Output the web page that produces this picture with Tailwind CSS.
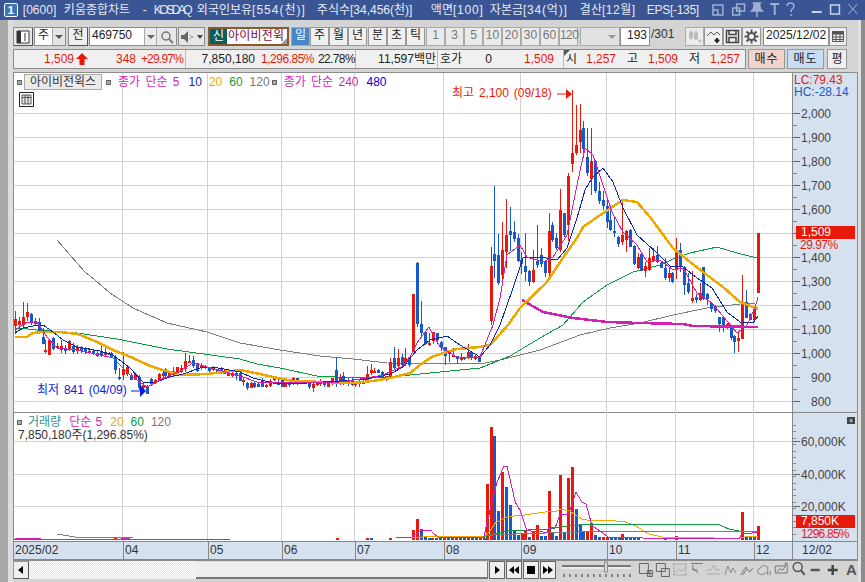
<!DOCTYPE html>
<html lang="ko">
<head>
<meta charset="UTF-8" />
<title>키움종합차트</title>
<script src="https://cdn.jsdelivr.net/npm/@tailwindcss/browser@4"></script>
</head>
<body class="w-[865px] h-[582px] overflow-hidden bg-[#d4d4d4] text-[12px] leading-[14px] text-[#222] [font-family:'Liberation_Sans','Noto_Sans_CJK_KR',sans-serif]">

<!-- title bar -->
<div class="h-[20px] bg-[#3a5593] flex items-center text-[#e6eaf4] whitespace-nowrap">
  <div class="ml-[4px] w-[14px] h-[14px] rounded-[2px] border border-white bg-[#3f73b8] text-white text-[11px] font-bold flex items-center justify-center">1</div>
  <div class="ml-[5px] flex">
    <span class="w-[41px]">[0600]</span>
    <span class="w-[79px]">키움종합차트</span>
    <span class="w-[11px]">-</span>
    <span class="w-[43px] tracking-[-2.5px]">KOSDAQ</span>
    <span class="w-[120px]">외국인보유<span class="tracking-[1px]">[554(천)]</span></span>
    <span class="w-[114px]">주식수[34,456(천)]</span>
    <span class="w-[59px]">액면<span class="tracking-[0.8px]">[100]</span></span>
    <span class="w-[90px]">자본금<span class="tracking-[0.8px]">[34(억)]</span></span>
    <span class="w-[67px]">결산<span class="tracking-[0.5px]">[12월]</span></span>
    <span class="w-[54px] tracking-[-0.3px]">EPS[-135]</span>
  </div>
  <svg class="ml-[6px]" width="160" height="20" viewBox="706 0 160 20" fill="none" stroke="#9fb0d2" stroke-width="1.5">
    <path d="M712 5h10v10h-10zM712 10h5v5" />
    <path d="M736 4h8v7h-8zM732 8h7v7h-7z" />
    <path d="M752 3h9M754 3l-1 6-2 2h11l-2-2-1-6M756.500 11v6" fill="#9fb0d2" />
    <path d="M770 4h9M774.500 4v11" stroke-width="2" />
    <path d="M787 6c0-4 7-4 7 0 0 3-3 2-3 6M791 14v2" />
    <path d="M812 12h10" stroke="#cdd6e8" stroke-width="2" />
    <path d="M831 5h9v9h-9z" stroke="#cdd6e8" />
    <path d="M849 4l9 10M858 4l-9 10" stroke="#a9b7d4" stroke-width="1" />
  </svg>
</div>

<div class="flex h-[562px]">
  <!-- left frame -->
  <div class="w-[8px] bg-[#a8a8a8]"></div>
  <div class="w-[5px] bg-[#dedede]"></div>

  <div class="w-[845px]">
    <!-- toolbar -->
    <div class="h-[19px] mt-[7px] flex whitespace-nowrap">
      <div class="w-[20px] bg-[#e8e8e8] border border-[#8c8c8c] border-r-[#555] border-b-[#555] flex items-center justify-center">
        <svg width="14" height="14" viewBox="0 0 14 14"><path d="M1 1h12v12H1z" fill="#fff" stroke="#333" /><path d="M1 1h4v12H1z" fill="#333" /><path d="M9 3v8" stroke="#333" /></svg>
      </div>
      <div class="ml-[1px] w-[32px] bg-white border border-[#8c8c8c] flex">
        <span class="w-[17px] text-center">주</span>
        <span class="flex-1 bg-[#e4e4e4] border-l border-[#aaa] flex items-center justify-center"><span class="border-x-[4px] border-x-transparent border-t-[4px] border-t-[#555]"></span></span>
      </div>
      <div class="ml-[2px] w-[20px] bg-[#efefef] border border-[#8c8c8c] border-r-[#555] border-b-[#555] text-center">전</div>
      <div class="ml-[1px] w-[88px] bg-white border border-[#8c8c8c] flex">
        <span class="w-[54px] pl-[2px]">469750</span>
        <span class="w-[13px] bg-[#ececec] border-x border-[#aaa] flex items-center justify-center"><span class="border-x-[4px] border-x-transparent border-t-[4px] border-t-[#666]"></span></span>
        <span class="flex-1 bg-[#e8e8e8] flex items-center justify-center">
          <svg width="14" height="14" viewBox="0 0 14 14" fill="none" stroke="#777" stroke-width="1.500"><circle cx="6" cy="6" r="4" /><path d="M9 9l4 4" stroke-width="2" /></svg>
        </span>
      </div>
      <div class="ml-[1px] w-[27px] bg-[#e6e6e6] border border-[#8c8c8c] flex items-center">
        <svg width="17" height="14" viewBox="0 0 17 14"><path d="M2 5h3l4-4v12l-4-4H2z" fill="#666" /><path d="M11 5v1M11 8v1M13 6v2" stroke="#666" /></svg>
        <span class="ml-[1px] border-x-[3px] border-x-transparent border-t-[4px] border-t-[#444]"></span>
      </div>
      <div class="ml-[3px] w-[81px] border-2 border-[#8a5a2a] bg-white flex relative leading-[15px]">
        <span class="w-[17px] bg-[#0b5c60] text-white text-center">신</span>
        <span class="pl-[1px] text-[#7c0a42] tracking-[0.2px]">아이비전윅</span>
        <span class="absolute right-0 bottom-0 border-l-[6px] border-l-transparent border-b-[6px] border-b-[#999]"></span>
      </div>
      <div class="ml-[2px] w-[19px] bg-[#4a86c6] text-white text-center border border-[#8ab0da]">일</div>
      <div class="w-[19px] bg-[#f0f0f0] text-center border border-[#999]">주</div>
      <div class="w-[19px] bg-[#f0f0f0] text-center border border-[#999]">월</div>
      <div class="w-[19px] bg-[#f0f0f0] text-center border border-[#999]">년</div>
      <div class="ml-[1px] w-[19px] bg-[#f0f0f0] text-center border border-[#999]">분</div>
      <div class="w-[19px] bg-[#f0f0f0] text-center border border-[#999]">초</div>
      <div class="w-[19px] bg-[#f0f0f0] text-center border border-[#999]">틱</div>
      <div class="ml-[1px] flex text-[#777]">
        <div class="w-[19px] bg-[#eaeaea] text-center border border-[#aaa]">1</div>
        <div class="w-[19px] bg-[#eaeaea] text-center border border-[#aaa]">3</div>
        <div class="w-[19px] bg-[#eaeaea] text-center border border-[#aaa]">5</div>
        <div class="w-[19px] bg-[#eaeaea] text-center border border-[#aaa]">10</div>
        <div class="w-[19px] bg-[#eaeaea] text-center border border-[#aaa]">20</div>
        <div class="w-[19px] bg-[#eaeaea] text-center border border-[#aaa]">30</div>
        <div class="w-[19px] bg-[#eaeaea] text-center border border-[#aaa]">60</div>
        <div class="w-[19px] bg-[#eaeaea] text-center border border-[#aaa] tracking-[-0.6px]">120</div>
      </div>
      <div class="ml-[2px] w-[40px] bg-[#e2e2e2] border border-[#aaa] flex justify-end">
        <span class="w-[14px] flex items-center justify-center"><span class="border-x-[4px] border-x-transparent border-t-[4px] border-t-[#999]"></span></span>
      </div>
      <div class="w-[30px] bg-white border border-[#8c8c8c] text-right pr-[2px]">193</div>
      <div class="w-[24px] pl-[1px] text-[#333]">/301</div>
      <div class="ml-[11px] flex">
        <div class="w-[19px] bg-[#ececec] border border-[#aaa] flex items-center justify-center">
          <svg width="16" height="15" viewBox="0 0 16 15" stroke="#bbb"><path d="M4 1v10M9 1v10" /><path d="M2.500 3h3v6h-3zM7.500 4h3v6h-3z" fill="#bbb" /><path d="M13 10v4M11 12h4" /></svg>
        </div>
        <div class="w-[19px] bg-[#f0f0f0] border border-[#999] flex items-center justify-center">
          <svg width="16" height="15" viewBox="0 0 16 15" fill="none" stroke="#555"><path d="M1 7l4-4 3 3 3-3 3 3" /><path d="M11 9v5M8.500 11.500h5" stroke="#222" stroke-width="2" /></svg>
        </div>
        <div class="w-[19px] bg-[#f0f0f0] border border-[#999] flex items-center justify-center">
          <svg width="15" height="15" viewBox="0 0 15 15" fill="none" stroke="#444" stroke-width="1.500"><path d="M1.500 1.500h12v12h-12z" /><path d="M4 1.500v4h7v-4M4 13.500v-5h7v5" /></svg>
        </div>
        <div class="w-[19px] bg-[#f0f0f0] border border-[#999] flex items-center justify-center">
          <svg width="15" height="15" viewBox="0 0 15 15" fill="none" stroke="#555" stroke-width="2"><circle cx="7.500" cy="7.500" r="3.500" /><path d="M7.500 0.500v3M7.500 11.500v3M0.500 7.500h3M11.500 7.500h3M2.500 2.500l2 2M10.500 10.500l2 2M12.500 2.500l-2 2M4.500 10.500l-2 2" /></svg>
        </div>
      </div>
      <div class="ml-[2px] w-[66px] bg-white border border-[#8c8c8c] pl-[2px]">2025/12/02</div>
      <div class="w-[18px] bg-[#efefef] border border-[#999] flex items-center justify-center">
        <svg width="14" height="13" viewBox="0 0 14 13" fill="none" stroke="#555"><path d="M1.500 1.500h11v10h-11z" /><path d="M1.500 2h11v2h-11z" fill="#555" /><path d="M1.500 7h11M1.500 9.500h11M5 4v7M9 4v7" /></svg>
      </div>
    </div>

    <!-- quote row -->
    <div class="h-[20px] mt-[3px] flex whitespace-nowrap">
      <div class="w-[733px] bg-[#f0f0f0] border border-[#8c8c8c] flex text-[#e8190a] leading-[18px]">
        <div class="w-[172px] flex border-r border-[#bbb]">
          <span class="w-[60px] text-right">1,509</span>
          <svg class="ml-[2px] mt-[3px]" width="12" height="12" viewBox="0 0 12 12"><path d="M6 0l6 6H8.500v6h-5V6H0z" fill="#e8190a" /></svg>
          <span class="w-[48px] text-right">348</span>
          <span class="w-[47px] text-right tracking-[-0.8px]">+29.97%</span>
        </div>
        <div class="w-[170px] flex border-r border-[#bbb]">
          <span class="w-[69px] text-right text-[#222]">7,850,180</span>
          <span class="w-[59px] text-right tracking-[-0.5px]">1,296.85%</span>
          <span class="w-[41px] text-right text-[#222] tracking-[-0.6px]">22.78%</span>
        </div>
        <div class="w-[82px] border-r border-[#bbb] text-right pr-[1px] text-[#222]">11,597백만</div>
        <div class="w-[126px] flex border-r border-[#bbb]">
          <span class="ml-[2px] w-[24px] text-[#222]">호가</span>
          <span class="w-[28px] text-right text-[#222]">0</span>
          <span class="w-[62px] text-right">1,509</span>
        </div>
        <div class="flex-1 flex relative">
          <span class="absolute left-0 top-0 border-r-[6px] border-r-transparent border-t-[6px] border-t-[#555]"></span>
          <span class="ml-[2px] w-[12px] text-[#222]">시</span>
          <span class="w-[38px] text-right">1,257</span>
          <span class="ml-[11px] w-[12px] text-[#222]">고</span>
          <span class="w-[39px] text-right">1,509</span>
          <span class="ml-[11px] w-[12px] text-[#222]">저</span>
          <span class="w-[39px] text-right">1,257</span>
        </div>
      </div>
      <div class="ml-[2px] w-[37px] bg-[#f3d2ca] border border-[#999] text-center leading-[18px] tracking-[1px]">매수</div>
      <div class="ml-[2px] w-[37px] bg-[#c6ddf3] border border-[#999] text-center leading-[18px] tracking-[1px]">매도</div>
      <div class="ml-[3px] w-[20px] bg-[#efefef] border border-[#999] text-center leading-[18px]">평</div>
    </div>

    <!-- chart box -->
    <div class="mt-[3px] flex">
      <div class="w-[845px] border border-[#8c8c8c]">
        <div class="flex h-[340px] border-b border-[#888]">
          <div class="relative w-[778px] bg-white">
            <svg id="price" class="block" width="778" height="340" viewBox="14 73 778 340"></svg>
            <div class="absolute left-[3px] top-[1px] flex items-center whitespace-nowrap h-[16px]">
              <span class="w-[5px] h-[5px] bg-[#aaa] border border-[#666]"></span>
              <span class="ml-[2px] w-[78px] h-[16px] bg-[#ebebeb] border border-[#aaa] text-center text-[#333]">아이비전윅스</span>
              <span class="ml-[4px] w-[5px] h-[5px] bg-[#aaa] border border-[#666]"></span>
              <span class="ml-[7px] text-[#d41fb4] [word-spacing:2px]">종가 단순 5</span>
              <span class="ml-[9px] text-[#0a2aa8]">10</span>
              <span class="ml-[7px] text-[#efa800]">20</span>
              <span class="ml-[7px] text-[#109a40]">60</span>
              <span class="ml-[7px] text-[#777]">120</span>
              <span class="ml-[2px] w-[5px] h-[5px] bg-[#aaa] border border-[#666]"></span>
              <span class="ml-[7px] text-[#d41fb4] [word-spacing:2px]">종가 단순 240</span>
              <span class="ml-[8px] text-[#0000e0]">480</span>
            </div>
            <svg class="absolute left-[5px] top-[19px]" width="15" height="15" viewBox="0 0 15 15" fill="none" stroke="#222"><path d="M0.500 0.500h14v14h-14z" /><path d="M3 3h9v9H3z" fill="#e8e8e8" stroke="#555" /><path d="M3 5.500h9M6 3v9M9 3v9" stroke="#555" /></svg>
          </div>
          <div class="relative w-[65px] bg-[#d6e1f0] border-l border-[#888]">
            <svg id="priceAxis" class="block" width="64" height="340" viewBox="793 73 64 340"></svg>
            <div class="absolute left-[1px] top-[1px] text-[#e8190a] leading-[12px]">LC:79.43</div>
            <div class="absolute left-[1px] top-[13px] text-[#1659c8] leading-[12px]">HC:-28.14</div>
            <div class="absolute left-[3px] top-[153px] w-[59px] h-[13px] bg-[#e8190a] text-white pl-[5px] leading-[13px]">1,509</div>
            <div class="absolute left-[3px] top-[166px] pl-[4px] text-[#e8190a] leading-[13px] tracking-[-0.5px]">29.97%</div>
          </div>
        </div>
        <div class="flex h-[128px]">
          <div class="relative w-[778px] bg-white">
            <svg id="volume" class="block" width="778" height="128" viewBox="14 414 778 128"></svg>
            <div class="absolute left-[3px] top-[1px] flex items-center whitespace-nowrap h-[16px]">
              <span class="w-[5px] h-[5px] bg-[#aaa] border border-[#666]"></span>
              <span class="ml-[6px] text-[#2b8f96]">거래량</span>
              <span class="ml-[8px] text-[#d41fb4] [word-spacing:1px]">단순 5</span>
              <span class="ml-[8px] text-[#efa800]">20</span>
              <span class="ml-[7px] text-[#109a40]">60</span>
              <span class="ml-[7px] text-[#777]">120</span>
            </div>
            <div class="absolute left-[4px] top-[15px] whitespace-nowrap text-[#333]">7,850,180주(1,296.85%)</div>
          </div>
          <div class="relative w-[65px] bg-[#d6e1f0] border-l border-[#888]">
            <svg id="volAxis" class="block" width="64" height="128" viewBox="793 414 64 128"></svg>
            <div class="absolute left-[54px] top-[4px] w-[8px] h-[7px] bg-[#444] flex items-center justify-center text-white text-[7px] leading-[7px]">×</div>
            <div class="absolute left-[3px] top-[102px] w-[59px] h-[13px] bg-[#e8190a] text-white pl-[5px] leading-[13px]">7,850K</div>
            <div class="absolute left-[3px] top-[115px] pl-[5px] text-[#e8190a] leading-[12px] tracking-[-0.8px]">1296.85%</div>
          </div>
        </div>
        <!-- date axis -->
        <div class="relative h-[19px] bg-[#d6e1f0] border-y border-[#888] text-[#333] leading-[17px]">
          <span class="absolute left-[1px] top-0">2025/02</span>
          <span class="absolute left-[109px] top-0 pl-[1px] h-[17px] border-l border-[#888]">04</span>
          <span class="absolute left-[194px] top-0 pl-[1px] h-[17px] border-l border-[#888]">05</span>
          <span class="absolute left-[268px] top-0 pl-[1px] h-[17px] border-l border-[#888]">06</span>
          <span class="absolute left-[341px] top-0 pl-[1px] h-[17px] border-l border-[#888]">07</span>
          <span class="absolute left-[430px] top-0 pl-[1px] h-[17px] border-l border-[#888]">08</span>
          <span class="absolute left-[507px] top-0 pl-[1px] h-[17px] border-l border-[#888]">09</span>
          <span class="absolute left-[593px] top-0 pl-[1px] h-[17px] border-l border-[#888]">10</span>
          <span class="absolute left-[662px] top-0 pl-[1px] h-[17px] border-l border-[#888]">11</span>
          <span class="absolute left-[740px] top-0 pl-[1px] h-[17px] border-l border-[#888]">12</span>
          <span class="absolute left-[778px] top-0 pl-[9px] h-[17px] border-l border-[#888]">12/02</span>
        </div>
      </div>
    </div>

    <!-- scroll + tools -->
    <div class="h-[18px] flex">
      <div class="w-[16px] bg-[#efefef] border border-[#999] border-r-[#555] border-b-[#555] flex items-center justify-center">
        <span class="border-y-[4px] border-y-transparent border-r-[5px] border-r-black"></span>
      </div>
      <div class="w-[167px] bg-[repeating-conic-gradient(#e6e6e6_0_25%,#ffffff_0_50%)] bg-[length:2px_2px]"></div>
      <div class="w-[293px] bg-[#efefef] border-t border-[#ddd] border-b-2 border-b-[#777] border-r border-r-[#777]"></div>
      <div class="ml-[1px] w-[16px] bg-[#efefef] border border-[#666] flex items-center justify-center">
        <span class="border-y-[4px] border-y-transparent border-l-[5px] border-l-black"></span>
      </div>
      <div class="ml-[1px] w-[16px] bg-[#efefef] border border-[#666] flex items-center justify-center">
        <span class="border-y-[4px] border-y-transparent border-r-[5px] border-r-black"></span><span class="border-y-[4px] border-y-transparent border-r-[5px] border-r-black"></span>
      </div>
      <div class="ml-[1px] w-[16px] bg-[#efefef] border border-[#666] flex items-center justify-center">
        <span class="w-[8px] h-[8px] bg-black"></span>
      </div>
      <div class="ml-[1px] w-[16px] bg-[#efefef] border border-[#666] flex items-center justify-center">
        <span class="border-y-[4px] border-y-transparent border-l-[5px] border-l-black"></span><span class="border-y-[4px] border-y-transparent border-l-[5px] border-l-black"></span>
      </div>
      <svg class="ml-[5px]" width="301" height="18" viewBox="561 561 301 18" fill="none" stroke="#666">
        <path d="M562 566h69" stroke="#777" stroke-width="2" />
        <path d="M562 568h69" stroke="#fff" />
        <path d="M604.500 562h3v10h-3z" fill="#ddd" stroke="#888" />
        <path d="M564 574v3M570 574v3M576 574v3M582 574v3M588 574v3M594 574v3M600 574v3M606 574v3M612 574v3M618 574v3M624 574v3M630 574v3" stroke="#333" />
        <path d="M639.500 563.500h9v10h-9zM647.500 570.500h5v6h-5zM650 570.500v6M647.500 573.500h5" />
        <path d="M656.500 563.500h9v8h-9zM661.500 568.500h8v8h-8z" />
        <path d="M673.500 564h13M673.500 575h13M674 564v11M686 564v11" stroke-dasharray="2 1" stroke="#999" />
        <path d="M675 573l4-4 3 2 4-4" stroke="#aaa" />
        <path d="M691 563.500h12M693 568l5 5M693 565v5h5" stroke="#777" />
        <path d="M707 570h4l3-5 2 5h4M707 574h13" stroke="#aaa" />
        <path d="M725 575l3-9 3 7 2-5 3 5" stroke="#888" />
        <path d="M741 575l5-8 4 5 3-4M743 575l4-6" stroke="#777" />
        <path d="M758 570l6-5 4 2v5l-6 3-4-2zM768 575v-3M770.500 575v-4" stroke="#888" />
        <path d="M775.500 566h10v-3h2v10h-12zM777 572l3-3 3 1 3-4" stroke="#777" />
        <circle cx="798" cy="567" r="4.500" stroke="#555" stroke-width="1.500" />
        <path d="M801 570l4 5" stroke="#555" stroke-width="2" />
        <path d="M811 570h9" stroke="#555" stroke-width="2.500" />
        <path d="M828 570h10M833 565v10" stroke="#444" stroke-width="2.500" />
      </svg>
      <span class="ml-[-16px] w-[12px] text-[15px] leading-[18px] font-bold text-[#555]">A</span>
    </div>
  </div>

  <!-- right frame -->
  <div class="w-[3px] bg-[#e0e0e0]"></div>
  <div class="w-[4px] bg-[#8c8c8c]"></div>
</div>

<script>
  const RED = '#e8190a', BLUE = '#1659c8';
  const gridX = [122, 207, 281, 354, 443, 520, 606, 675, 753];

  // [zoomX, colour, high, top, bottom, low], read from 3x crops
  const seg = (x0, y0, rows) => rows.map(r => ({
    x: Math.round(x0 + r[0] / 3),
    c: r[1] === 'r' ? RED : BLUE,
    h: y0 + r[2] / 3, t: y0 + r[3] / 3, b: y0 + r[4] / 3, l: y0 + r[5] / 3
  }));

  const candles = [
    ...seg(0, 280, [
      [46,'r',92,118,140,160],[56,'r',110,122,134,150],[68,'r',66,110,135,140],[80,'r',70,97,112,125],[92,'b',100,102,130,135],
      [104,'r',115,122,132,135],[116,'b',115,125,150,155],[128,'b',145,170,190,192],[136,'r',180,210,212,220],[148,'r',178,180,224,224],
      [160,'b',170,175,207,210],[172,'r',190,197,200,205],[184,'r',180,198,210,218],[196,'b',195,205,215,222],[208,'r',180,184,210,212],
      [220,'b',190,198,215,222],[232,'r',195,200,212,222],[244,'b',198,202,214,220],[254,'b',200,208,218,222],[266,'b',205,212,218,224],
      [278,'b',210,214,222,226],[290,'r',212,218,226,230],[302,'b',198,212,228,232],[314,'r',205,216,224,232],[326,'b',216,218,224,226],
      [334,'b',215,220,232,234],[346,'b',225,232,272,282],[358,'b',265,292,298,300],[370,'r',215,268,285,298],[382,'r',255,262,282,288],
      [394,'b',278,284,298,300],[404,'r',280,282,300,302],[416,'b',285,292,325,330],[428,'r',305,315,325,335],[440,'b',316,318,342,342],
      [452,'b',295,298,312,320],[464,'r',298,300,310,312],[476,'r',280,282,302,305],[488,'r',268,278,288,295],[496,'b',265,268,288,292],
      [508,'r',272,280,292,294],[520,'r',262,272,285,288],[532,'r',262,262,280,285],[544,'r',255,265,278,280],[556,'r',218,244,268,275],
      [568,'r',226,244,246,248],[580,'b',228,240,258,265],[590,'b',248,250,275,276],[602,'r',250,258,265,272],[614,'b',255,258,262,266],
      [626,'b',260,262,275,282],[638,'r',258,262,272,274],[650,'b',266,268,278,280],[662,'b',262,268,280,282],[672,'r',270,275,280,282],
      [684,'r',268,275,288,290],[696,'r',276,278,288,290],[708,'b',268,280,290,300],[720,'b',270,278,302,304]
    ]),
    ...seg(240, 250, [
      [10,'r',380,390,395,408],[22,'b',396,400,415,420],[34,'r',396,398,413,414],[42,'b',392,400,412,414],[55,'b',400,402,410,412],
      [67,'b',385,390,410,412],[79,'r',402,404,410,414],[91,'r',388,394,410,412],[103,'r',378,384,390,392],[115,'b',385,395,405,407],
      [127,'b',385,388,411,412],[136,'r',400,402,410,411],[148,'b',395,397,405,410],[160,'r',380,385,403,405],[172,'b',384,385,403,405],
      [196,'r',390,393,398,402],[208,'b',395,397,412,415],[218,'r',395,402,415,425],[230,'r',398,400,404,406],[241,'r',388,397,404,410],
      [253,'b',392,396,404,410],[265,'r',393,398,410,412],[277,'r',385,385,403,405],[289,'b',322,360,395,412],[301,'r',372,382,395,405],
      [310,'b',365,377,390,405],[323,'b',385,390,403,408],[335,'b',385,390,405,410],[346,'r',395,397,405,410],[358,'b',390,392,400,410],
      [370,'r',391,393,402,404],[382,'r',348,372,390,395],[394,'r',342,360,370,375],[403,'r',355,362,368,370],[415,'b',358,360,368,370],
      [427,'b',362,367,390,392],[439,'r',378,378,390,392],[451,'r',325,335,385,387],[463,'b',292,325,355,358],[475,'r',296,325,350,355],
      [487,'b',312,320,345,350],[496,'r',295,323,340,350],[508,'b',320,322,345,350],[520,'r',132,132,307,307],[532,'b',36,38,222,232],
      [544,'b',153,222,250,265],[556,'b',244,245,282,285],[568,'r',250,278,285,290],[578,'r',246,247,275,282],[590,'b',249,250,272,274],
      [602,'b',274,275,292,305],[614,'b',292,292,318,345],[626,'r',305,307,310,335],[638,'r',295,315,320,322],[650,'b',317,318,326,340],
      [662,'r',310,320,328,335],[672,'b',321,322,328,330],[684,'r',283,305,320,328],[694,'b',306,307,326,330],[706,'r',312,318,328,330],
      [718,'b',319,320,335,337]
    ]),
    ...seg(460, 85, [
      [94,'r',487,543,708,720],[103,'b',303,507,527,580],[115,'b',447,510,595,600],[127,'r',410,495,570,590],[139,'r',342,450,500,550],
      [151,'b',365,438,450,497],[163,'b',407,440,462,470],[175,'b',447,460,528,530],[184,'b',500,525,538,565],[196,'b',445,543,562,590],
      [208,'b',556,558,590,605],[220,'r',495,555,590,595],[232,'b',420,528,540,550],[244,'b',490,510,538,548],[256,'b',526,528,565,578],
      [268,'r',385,438,565,585],[277,'b',410,420,465,470],[289,'b',445,460,490,495],[301,'r',312,375,495,500],[313,'b',384,385,450,455],
      [325,'r',265,272,420,470],[337,'r',15,205,238,262],[349,'r',60,180,205,210],[361,'r',57,135,170,205],[370,'b',108,130,192,220],
      [382,'b',130,215,262,275],[394,'r',130,228,282,332],[406,'b',226,228,318,325],[418,'b',290,318,348,355],[430,'b',318,345,362,375],
      [442,'b',340,362,410,430],[451,'b',360,405,435,437],[463,'b',395,438,445,455],[475,'b',453,455,475,485],[487,'r',350,450,472,480],
      [499,'r',435,437,463,500],[511,'b',433,435,485,487],[523,'b',481,483,538,540],[535,'r',505,517,550,552],[544,'b',505,508,558,560],
      [556,'r',530,543,558,575],[568,'r',490,520,555,555],[580,'r',490,513,525,530],[592,'b',495,510,532,534]
    ]),
    ...seg(640, 190, [
      [15,'r',225,230,243,260],[27,'r',175,205,240,245],[39,'r',180,198,212,215],[51,'b',168,195,215,218],[63,'b',216,218,232,234],
      [75,'b',205,233,264,270],[87,'r',235,248,263,278],[97,'b',246,248,275,280],[109,'r',143,180,238,265],[121,'b',158,180,232,245],
      [133,'b',228,230,283,315],[145,'b',248,278,306,310],[157,'r',243,323,332,340],[169,'b',312,322,332,340],[179,'r',280,308,330,335],
      [190,'b',232,232,328,330],[202,'b',310,312,328,345],[214,'b',336,338,355,365],[226,'b',345,350,363,370],[238,'b',380,381,402,425],
      [250,'b',380,381,415,425],[262,'r',400,402,415,417],[272,'b',408,410,442,450],[283,'b',436,438,457,490],[295,'r',425,443,453,485],
      [307,'r',255,335,445,445],[319,'b',300,336,383,385],[331,'b',370,372,390,392],[343,'r',352,355,390,390],[355,'r',130,130,310,310]
    ])
  ];

  const ma = {
    gray: [[57,240],[70,255],[85,272],[95,280],[110,293],[133,308],[167,323],[207,332],[240,343],[280,350],[320,356],[353,359],[387,363],[480,364],[500,360],[540,350],[580,335],[610,328],[640,323],[673,315],[707,308],[740,304],[755,303]],
    green: [[18,328],[37,330],[77,333],[117,339],[167,349],[240,359],[257,364],[280,368],[317,376],[353,378],[387,377],[410,375],[440,372],[480,368],[510,356],[540,338],[563,325],[583,302],[607,285],[633,272],[660,265],[673,259],[690,253],[717,247],[737,253],[757,258]],
    ma240: [[522,300],[543,312],[573,318],[607,322],[640,323],[683,324],[693,326],[758,327]],
    orange: [[15,337],[27,337],[33,333],[42,332],[60,332],[78,334],[97,342],[113,350],[133,358],[150,366],[163,370],[180,375],[207,374],[240,370],[260,374],[273,377],[293,381],[323,382],[353,383],[373,381],[390,378],[410,373],[420,365],[432,357],[443,353],[457,349],[480,347],[490,345],[508,325],[520,308],[547,282],[560,262],[577,238],[583,227],[603,213],[623,200],[637,202],[650,217],[673,248],[690,262],[707,275],[723,287],[740,302],[758,309]],
    navy: [[15,333],[23,328],[33,326],[43,325],[53,332],[63,340],[77,347],[100,351],[113,355],[130,368],[143,382],[153,383],[170,377],[183,374],[200,368],[213,367],[240,372],[253,378],[273,383],[307,383],[340,381],[367,379],[390,374],[403,367],[417,350],[430,340],[447,336],[460,345],[480,357],[490,345],[500,325],[513,288],[523,258],[540,257],[557,260],[567,248],[577,218],[585,190],[592,178],[603,168],[613,182],[623,208],[637,235],[657,253],[670,266],[683,267],[697,278],[712,288],[727,312],[740,322],[753,323],[758,316]],
    pink: [[15,330],[27,322],[37,322],[47,337],[57,348],[77,350],[100,355],[113,358],[130,375],[147,387],[160,380],[180,371],[193,363],[207,367],[240,376],[257,382],[280,382],[307,383],[340,382],[367,378],[383,375],[403,366],[410,357],[417,343],[429,327],[440,347],[457,357],[480,357],[493,325],[500,298],[507,255],[520,245],[527,257],[543,262],[553,257],[567,235],[577,185],[585,148],[593,155],[603,185],[612,212],[623,232],[637,245],[647,262],[660,260],[673,270],[683,268],[697,293],[712,303],[722,315],[737,333],[747,325],[755,308],[758,297]]
  };

  const poly = (pts, stroke, w) => `<polyline points="${pts.map(p => p.join(',')).join(' ')}" fill="none" stroke="${stroke}" stroke-width="${w}" stroke-linejoin="round" shape-rendering="crispEdges" />`;

  // price pane
  let s = '';
  gridX.forEach(x => s += `<rect x="${x}" y="73" width="1" height="340" fill="#d2d2d2" />`);
  for (let y = 113; y <= 402; y += 24) s += `<rect x="14" y="${y}" width="778" height="1" fill="#d2d2d2" />`;
  s += poly(ma.gray, '#7d7d7d', 1) + poly(ma.green, '#109a40', 1);
  candles.forEach(k => {
    s += `<rect x="${k.x}" y="${Math.round(k.h)}" width="1" height="${Math.round(k.l - k.h)}" fill="${k.c}" />`;
    s += `<rect x="${k.x - 1}" y="${Math.round(k.t)}" width="3" height="${Math.max(2, Math.round(k.b - k.t))}" fill="${k.c}" />`;
  });
  s += poly(ma.ma240, '#d41fb4', 2.5) + poly(ma.orange, '#efa800', 2.5) + poly(ma.navy, '#0a2aa8', 1) + poly(ma.pink, '#d41fb4', 1);
  s += `<text x="452" y="97" fill="${RED}" font-size="12" word-spacing="1.500">최고 2,100 (09/18)</text>`;
  s += `<path d="M557 94h9" stroke="${RED}" /><path d="M566 89l6 5-6 5z" fill="${RED}" /><rect x="572" y="90" width="1" height="10" fill="${RED}" />`;
  s += `<text x="37" y="394" fill="#0a1ae0" font-size="12" word-spacing="1.500">최저 841 (04/09)</text>`;
  s += `<path d="M131 391h9" stroke="#0a1ae0" /><path d="M140 385l6 6-6 6z" fill="#0a1ae0" />`;
  document.getElementById('price').innerHTML = s;

  // price axis
  let a = '';
  const labels = ['2,000','1,900','1,800','1,700','1,600','1,500','1,400','1,300','1,200','1,100','1,000','900','800'];
  labels.forEach((t, i) => {
    const y = 113 + i * 24;
    a += `<rect x="793" y="${y}" width="7" height="1" fill="#666" /><rect x="793" y="${y + 12}" width="4" height="1" fill="#888" />`;
    if (t !== '1,500') a += `<text x="${t.length > 3 ? 801 : 811}" y="${y + 5}" fill="#444" font-size="12">${t}</text>`;
  });
  document.getElementById('priceAxis').innerHTML = a;

  // volume bars: [zoomX, colour, top] from crop at (432,400)
  const bars = [[1240,'r',393,0],[1252,'r',360,0],[1264,'b',390,0],[1276,'b',415,0],[1288,'b',418,0],[1010,'r',417,0],[1100,'r',417,0],[1114,'b',417,0],[1170,'r',417,0],[345,'r',418,0]]
    .map(b => [b[0] / 3, b[1], 400 + b[2] / 3]);
  [[165,'r',255],[178,'r',84],[187,'b',110],[199,'b',335],[211,'r',218],[223,'b',264],[235,'b',318],[247,'b',393],[259,'b',408],[269,'r',405],[280,'r',395],[292,'b',413],[304,'r',395],[316,'r',378],[328,'b',410],[340,'b',410],[352,'r',275],[361,'b',402],[373,'b',410],[385,'r',228],[397,'b',398],[409,'r',237],[421,'r',204],[433,'b',330],[445,'b',375],[454,'b',400],[466,'r',396],[478,'r',372],[490,'b',407],[502,'b',413],[514,'r',413],[526,'r',413],[538,'b',415],[550,'b',417],[560,'b',417],[571,'r',405],[583,'b',416],[595,'b',417],[607,'b',417],[619,'b',417],[700,'r',415],[733,'r',411],[930,'r',338],[942,'b',410],[954,'b',412],[966,'b',412],[978,'r',380]]
    .forEach(b => bars.push([432 + b[0] / 3, b[1], 400 + b[2] / 3]));
  for (let z = 0; z < 165; z += 12) bars.push([432 + z / 3, z % 36 ? 'b' : 'r', 539]);

  const zl = pts => pts.map(p => [432 + p[0] / 3, 400 + p[1] / 3]);
  let v = '';
  gridX.forEach(x => v += `<rect x="${x}" y="414" width="1" height="128" fill="#d2d2d2" />`);
  [442, 475, 507].forEach(y => v += `<rect x="14" y="${y}" width="778" height="1" fill="#d2d2d2" />`);
  bars.forEach(b => v += `<rect x="${Math.round(b[0]) - 1}" y="${Math.round(b[2])}" width="3" height="${541 - Math.round(b[2])}" fill="${b[1] === 'r' ? RED : BLUE}" />`);
  v += poly([[14,540],[230,540]], '#109a40', 1);
  v += poly([[15,539],[41,539]], '#d41fb4', 1) + poly([[121,539],[130,539]], '#d41fb4', 1);
  v += poly([[57,535],[75,538],[133,538]], '#7d7d7d', 1);
  v += poly([[396,539],[412,538],[420,532],[432,531]], '#d41fb4', 1);
  v += poly(zl([[-60,415],[0,413],[155,413],[175,395],[190,372],[230,352],[265,350],[345,338],[375,336],[385,330],[410,335],[450,360],[475,365],[530,365],[575,367],[610,380],[650,405],[695,415],[920,418],[940,414],[978,413]]), '#efa800', 1);
  v += poly(zl([[155,415],[180,405],[240,394],[340,392],[410,380],[470,376],[860,376],[890,390],[920,396],[978,398]]), '#109a40', 1);
  v += poly(zl([[155,412],[190,407],[340,402],[470,398],[975,398]]), '#7d7d7d', 1);
  v += poly(zl([[0,400],[20,415],[155,415],[175,330],[195,250],[215,202],[225,202],[250,310],[265,335],[285,395],[345,400],[350,388],[370,385],[385,345],[410,345],[432,280],[450,310],[462,315],[480,380],[510,400],[530,415],[620,415],[640,418],[920,420],[930,405],[960,402],[978,400]]), '#d41fb4', 1);
  document.getElementById('volume').innerHTML = v;

  // volume axis
  let w = '';
  for (let y = 426; y < 541; y += 6.4) w += `<rect x="793" y="${Math.round(y)}" width="3" height="1" fill="#888" />`;
  [[442,'60,000K'],[475,'40,000K'],[507,'20,000K']].forEach(l => {
    w += `<rect x="793" y="${l[0]}" width="7" height="1" fill="#666" /><text x="801" y="${l[0] + 5}" fill="#444" font-size="12">${l[1]}</text>`;
  });
  document.getElementById('volAxis').innerHTML = w;
</script>
</body>
</html>
